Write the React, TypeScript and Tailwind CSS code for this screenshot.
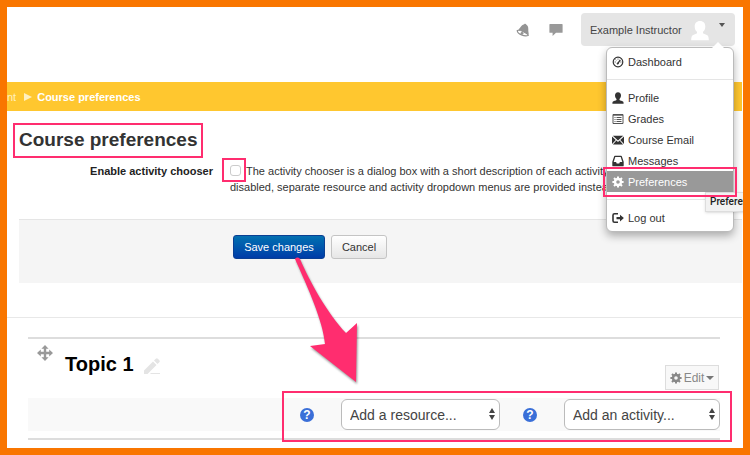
import { Fragment, type ReactNode } from "react";
import { clsx } from "clsx";

interface MenuItem {
  label: string;
  icon: ReactNode;
  active?: boolean;
  divider?: boolean;
}

function BellIcon() {
  return (
    <svg viewBox="0 0 14 14" className="h-[14px] w-[14px]">
      <path
        fill="#949494"
        d="M8.200 1.200C9 .4 10 .8 10.200 1.600c1.700 1 2.200 2.800 2.100 4.600-.1 2 .3 3.600.5 5.200L2.200 6.500C4.600 5 4.800 2 8.200 1.200z"
      />
      <path
        d="M1.300 7.500c1.500-.7 3.800.1 6.100 1.200 2.300 1.100 4.500 2.300 4.900 3.600-1.500.9-4.200.7-6.800-.4C3.200 10.900 1.200 9.300 1.300 7.500z"
        fill="#fff"
        stroke="#8f8f8f"
        strokeWidth="1.200"
      />
      <circle cx="6" cy="10.300" r="1.400" fill="#949494" />
    </svg>
  );
}

function MessageIcon() {
  return (
    <svg viewBox="0 0 14 12" className="h-3 w-[14px]" fill="#999">
      <path d="M1 0h12a.6.6 0 0 1 .6.6v7.600a.6.6 0 0 1-.6.6H7L3.600 12V8.800H1a.6.6 0 0 1-.6-.6V.6A.6.6 0 0 1 1 0z" />
    </svg>
  );
}

function AvatarIcon() {
  return (
    <svg viewBox="0 0 20 21" className="h-[21px] w-5" fill="#fff">
      <path d="M10 1c3.500 0 5.300 2.400 5.300 5.400 0 2.300-.9 4.300-2.300 5.400v1.500c1 .9 3 1 4.300 2 1.200.9 1.500 2.700 1.500 5H1.200c0-2.300.3-4.100 1.500-5 1.300-1 3.300-1.100 4.300-2v-1.500C5.600 10.700 4.700 8.700 4.700 6.400 4.700 3.400 6.500 1 10 1z" />
    </svg>
  );
}

function GearIcon() {
  return (
    <svg
      viewBox="0 0 12 12"
      className="h-3 w-3"
      fill="none"
      stroke="currentColor"
    >
      <circle cx="6" cy="6" r="3" strokeWidth="2.400" />
      <path
        strokeWidth="2"
        d="M6 .4v2M6 9.600v2M.4 6h2M9.600 6h2M2 2l1.500 1.500M8.500 8.500 10 10M10 2 8.500 3.500M3.500 8.500 2 10"
      />
    </svg>
  );
}

function DashboardIcon() {
  return (
    <svg viewBox="0 0 12 12" className="h-3 w-3" fill="none" stroke="#333">
      <circle cx="6" cy="6" r="4.800" strokeWidth="1.200" />
      <path d="M5.700 7.600 8.300 3.900" strokeWidth="1.300" />
      <path d="M2.700 6h1M8.400 6h1M3.600 3.700l.7.6M6 2.600v.9" strokeWidth=".9" />
      <circle cx="5.700" cy="7.600" r=".7" fill="#333" strokeWidth=".6" />
    </svg>
  );
}

function ProfileIcon() {
  return (
    <svg viewBox="0 0 12 12" className="h-3 w-3" fill="#333">
      <path d="M6 .3c2 0 3 1.300 3 3.200 0 1.500-.7 2.800-1.500 3.400v1c.8.7 2.400.8 3.400 1.500.6.4.7 1 .7 2.300H.4c0-1.300.1-1.900.7-2.300 1-.7 2.600-.8 3.400-1.500v-1C3.700 6.300 3 5 3 3.500 3 1.600 4 .3 6 .3z" />
    </svg>
  );
}

function GradesIcon() {
  return (
    <svg viewBox="0 0 12 12" className="h-3 w-3" fill="none" stroke="#555">
      <path d="M1 1.500h10v9H1z" />
      <path d="M1 2h10" strokeWidth="1.400" />
      <path d="M4.500 4.500h5M4.500 6.500h5M4.500 8.500h5" />
      <path d="M2.500 4.500h1M2.500 6.500h1M2.500 8.500h1" />
    </svg>
  );
}

function MailIcon() {
  return (
    <svg viewBox="0 0 12 12" className="h-3 w-3" fill="#333">
      <path d="M.8 1.800h10.400L6 6.400zM0 2.400l3.800 3.500L0 9.900zM12 2.400 8.200 5.900l3.800 4zM4.400 6.600 6 8l1.600-1.400 3.500 3.800H.9z" />
    </svg>
  );
}

function InboxIcon() {
  return (
    <svg viewBox="0 0 12 12" className="h-3 w-3">
      <path
        fill="#333"
        fillRule="evenodd"
        d="M2.900.8h6.200c.4 0 .6.2.7.5l1.900 5.400v3.700c0 .6-.3.9-.9.9H1.200c-.6 0-.9-.3-.9-.9V6.700l1.900-5.400c.1-.3.3-.5.7-.5zM3.300 2 1.700 7h2.400l.6 1.500h2.600L7.900 7h2.400L8.700 2z"
      />
    </svg>
  );
}

function LogoutIcon() {
  return (
    <svg viewBox="0 0 12 12" className="h-3 w-3">
      <path
        d="M6 1.700H2.500A1.500 1.500 0 0 0 1 3.200v5.600a1.500 1.500 0 0 0 1.500 1.500H6"
        fill="none"
        stroke="#333"
        strokeWidth="1.600"
      />
      <path d="M4.500 4.900H8V2.700L11.900 6.100 8 9.500V7.300H4.500z" fill="#333" />
    </svg>
  );
}

function MoveIcon() {
  return (
    <svg viewBox="0 0 16 16" className="h-4 w-4" fill="#999">
      <path d="M8 0l3.600 3.800H9.200v3h3V4.400L16 8l-3.800 3.600V9.200h-3v3h2.400L8 16l-3.600-3.800h2.400v-3h-3v2.400L0 8l3.800-3.600v2.400h3v-3H4.400z" />
    </svg>
  );
}

function PencilIcon() {
  return (
    <svg viewBox="0 0 16 16" className="h-4 w-4" fill="#e4e4e4">
      <path d="M0 12.500 9 3.500l3.500 3.500-9 9H0zM10 2.500l1.800-1.800a1.400 1.400 0 0 1 2 0l1.500 1.500a1.400 1.400 0 0 1 0 2L13.500 6zM7 15h9v1H6z" />
    </svg>
  );
}

function HelpIcon() {
  return (
    <button
      aria-label="Help"
      className="flex h-[14px] w-[14px] shrink-0 items-center justify-center rounded-full bg-[#3a6fd8] text-[12px] leading-none font-bold text-white"
    >
      ?
    </button>
  );
}

const menu: MenuItem[] = [
  { label: "Dashboard", icon: <DashboardIcon /> },
  { label: "Profile", icon: <ProfileIcon />, divider: true },
  { label: "Grades", icon: <GradesIcon /> },
  { label: "Course Email", icon: <MailIcon /> },
  { label: "Messages", icon: <InboxIcon /> },
  { label: "Preferences", icon: <GearIcon />, active: true },
  { label: "Log out", icon: <LogoutIcon />, divider: true },
];

function UserMenu() {
  return (
    <nav className="absolute top-[34px] right-px z-20 w-32 rounded-md border border-[#bbb] bg-white py-[3px] shadow-[0_4px_8px_rgba(0,0,0,0.3)]">
      <svg
        viewBox="0 0 12 6"
        className="absolute -top-[6px] right-[9px] h-[6px] w-3"
      >
        <path d="M0 6 6 0l6 6z" fill="#fff" />
      </svg>
      {menu.map((item) => (
        <Fragment key={item.label}>
          {item.divider && <hr className="my-[7px] border-[#e5e5e5]" />}
          <a
            href="#"
            className={clsx(
              "relative flex h-[21px] items-center gap-1 pl-[5px]",
              item.active ? "bg-[#999] text-white" : "text-[#333]"
            )}
          >
            {item.icon}
            <span>{item.label}</span>
            {item.active && (
              <>
                <span className="absolute top-[21px] left-[98px] z-10 flex h-5 items-center border border-[#ddd] bg-[#f2f2f2] pr-6 pl-1 font-[Roboto] text-[10px] font-medium text-[#222] shadow-sm">
                  Preferences
                </span>
                <span className="absolute -top-[4px] -right-[4px] -bottom-[5px] -left-[4px] z-20 border-2 border-[#ff2d6f]" />
              </>
            )}
          </a>
        </Fragment>
      ))}
    </nav>
  );
}

function PickerSelect({ label, className }: { label: string; className: string }) {
  return (
    <div className={clsx("relative", className)}>
      <select
        aria-label={label}
        className="h-[31px] w-full appearance-none rounded-md border border-[#bbb] bg-white pl-2 text-[14px] text-[#444]"
      >
        <option>{label}</option>
      </select>
      <svg
        viewBox="0 0 6 12"
        className="pointer-events-none absolute top-[9px] right-[5px] h-3 w-[6px]"
        fill="#444"
      >
        <path d="M3 0l3 5H0zM3 12l3-5H0z" />
      </svg>
    </div>
  );
}

export default function App() {
  return (
    <div className="min-h-screen overflow-hidden border-[7px] border-[#f97600] bg-white pr-px font-['Liberation_Sans',Arial,sans-serif] text-[11px] leading-4 text-[#333]">
      <header className="flex h-[75px] items-start justify-end pt-[6px] pr-[7px]">
        <div className="flex h-[33px] items-center gap-[19px] pr-[18px]">
          <button aria-label="Notifications">
            <BellIcon />
          </button>
          <button aria-label="Messages">
            <MessageIcon />
          </button>
        </div>
        <div className="relative">
          <button className="flex h-[33px] w-[154px] items-center rounded-sm bg-[#e5e5e5] pl-[9px] text-[#444]">
            <span>Example Instructor</span>
            <span className="ml-2 pt-px">
              <AvatarIcon />
            </span>
            <span className="mt-[10px] ml-[9px] self-start border-x-[3px] border-t-4 border-x-transparent border-t-[#555]" />
          </button>
          <UserMenu />
        </div>
      </header>

      <div className="flex h-[29px] items-center bg-[#ffc72f] font-bold">
        <a href="#" className="font-normal text-[#fff0c0]">
          nt
        </a>
        <svg viewBox="0 0 8 8" className="ml-2 h-2 w-2" fill="#fff0c0">
          <path d="M0 0l8 4-8 4z" />
        </svg>
        <span className="ml-[5px] text-white">Course preferences</span>
      </div>

      <main className="relative">
        <div className="px-[6px] pt-3">
          <h1 className="inline-block h-[35px] border-2 border-[#ff2d6f] px-1 text-[19px] leading-[30px] font-bold">
            Course preferences
          </h1>
        </div>
        <form>
          <div className="flex h-[61px] items-start">
            <label
              htmlFor="chooser"
              className="w-[206px] pt-[5px] text-right font-bold text-[#222]"
            >
              Enable activity chooser
            </label>
            <div className="ml-[9px] flex-1 pt-[5px] pr-8 pl-2">
              <span className="relative float-left mr-[5px] h-4 w-[11px]">
                <input
                  id="chooser"
                  type="checkbox"
                  className="mt-[2px] block h-[11px] w-[11px] appearance-none rounded-[3px] border border-[#ccc] bg-white"
                />
                <span className="pointer-events-none absolute -top-[5px] -left-[8px] h-6 w-6 border-2 border-[#ff2d6f]" />
              </span>
              The activity chooser is a dialog box with a short description of
              each activity and resource. If disabled, separate resource and
              activity dropdown menus are provided instead.
            </div>
          </div>
          <div className="ml-3 flex h-16 items-start gap-[6px] border-t border-[#e5e5e5] bg-[#f5f5f5] pt-[15px] pl-[214px]">
            <button
              type="button"
              className="h-6 w-[92px] rounded-[3px] border border-[#0a3f93] bg-linear-to-b from-[#0670b0] to-[#003ba8] text-white"
            >
              Save changes
            </button>
            <button
              type="button"
              className="h-6 w-14 rounded-[3px] border border-[#c4c4c4] bg-linear-to-b from-white to-[#e6e6e6]"
            >
              Cancel
            </button>
          </div>
        </form>

        <div className="mt-[34px] border-t border-[#e8e8e8] pt-[19px] pr-[22px] pl-[21px]">
          <section className="border-y-2 border-[#ddd]">
            <div className="flex h-[59px] items-start">
              <span className="mt-[6px] ml-[9px]">
                <MoveIcon />
              </span>
              <h2 className="mt-[13px] ml-3 text-[20px] leading-6 font-bold text-black">
                Topic 1
              </h2>
              <button aria-label="Edit topic name" className="mt-[19px] ml-[10px]">
                <PencilIcon />
              </button>
              <button className="mt-[26px] mr-px ml-auto flex h-[25px] w-[54px] items-center justify-center gap-[2px] border border-[#ddd] bg-[#f8f8f8] text-[12px] text-[#888]">
                <GearIcon />
                Edit
                <span className="border-x-4 border-t-4 border-x-transparent border-t-[#777]" />
              </button>
            </div>
            <div className="relative mb-[7px] flex h-[33px] items-center justify-end bg-[#f9f9f9]">
              <HelpIcon />
              <PickerSelect label="Add a resource..." className="ml-[27px] w-[159px]" />
              <span className="w-[23px]" />
              <HelpIcon />
              <PickerSelect label="Add an activity..." className="ml-[27px] w-[156px]" />
              <span className="pointer-events-none absolute -top-[7px] -right-[12px] h-[51px] w-[450px] border-2 border-[#ff2d6f]" />
            </div>
          </section>
        </div>

        <svg
          viewBox="0 0 70 130"
          className="pointer-events-none absolute top-[144px] left-[283px] h-[130px] w-[70px] drop-shadow-[1px_2px_1px_rgba(0,0,0,0.4)]"
          fill="#ff2d6f"
        >
          <path d="M5 4C6 2 9 2 10 4 20 27 37 58 56 78L67 68 66 127 20 91 35 89C33 66 18 33 5 4z" />
        </svg>
      </main>
    </div>
  );
}
